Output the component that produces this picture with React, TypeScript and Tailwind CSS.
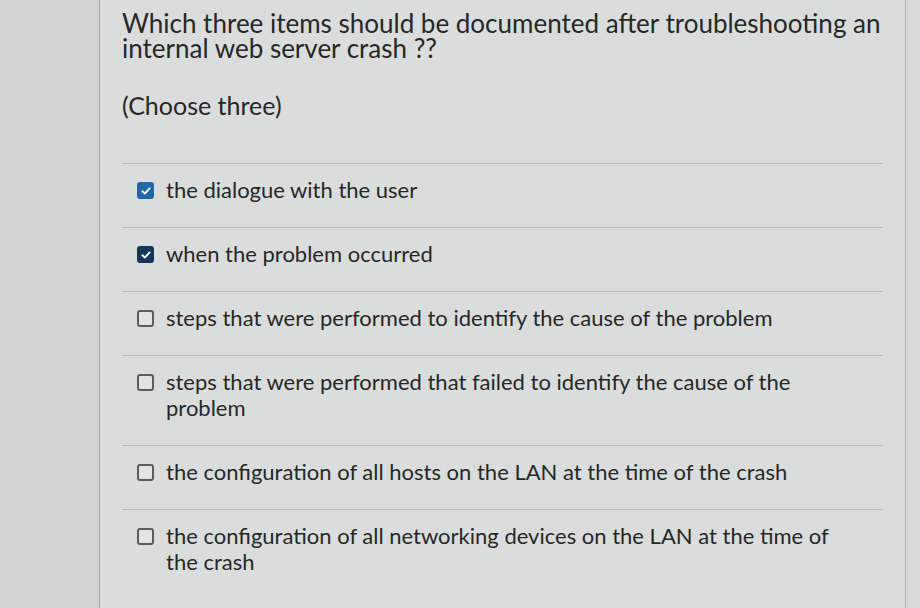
import React from "react";

type Option = { text: string; checked?: boolean; tone?: string };

const options: Option[] = [
  { text: "the dialogue with the user", checked: true, tone: "bg-[#1f68a8]" },
  { text: "when the problem occurred", checked: true, tone: "bg-[#16355a]" },
  { text: "steps that were performed to identify the cause of the problem" },
  {
    text: "steps that were performed that failed to identify the cause of the problem",
  },
  { text: "the configuration of all hosts on the LAN at the time of the crash" },
  {
    text: "the configuration of all networking devices on the LAN at the time of the crash",
  },
];

function Box({ checked, tone }: { checked?: boolean; tone?: string }) {
  if (checked) {
    return (
      <span
        className={`mt-[5px] flex h-[17px] w-[17px] shrink-0 items-center justify-center rounded-[3px] ${tone}`}
      >
        <svg viewBox="0 0 16 16" className="h-[12px] w-[12px]">
          <path
            d="M3.2 8.4 L6.4 11.4 L12.8 4.6"
            fill="none"
            stroke="#ffffff"
            strokeWidth="2.6"
            strokeLinecap="round"
            strokeLinejoin="round"
          />
        </svg>
      </span>
    );
  }
  return (
    <span className="mt-[5px] h-[17px] w-[17px] shrink-0 rounded-[3px] border-2 border-[#5a5d5c] bg-[#e2e5e4]" />
  );
}

export default function App() {
  return (
    <div
      className="flex h-[608px] w-[920px] overflow-hidden bg-[#d8dbda] text-[#262827]"
      style={{ fontFamily: "Lato, 'Open Sans', sans-serif" }}
    >
      <div className="w-[100px] shrink-0 border-r border-[#9fa3a1] bg-[#d2d5d3]" />
      <div className="flex w-[806px] shrink-0 flex-col border-r border-[#b2b6b4] bg-[#dadddc] pl-[22px] pr-[22px]">
        <h1 className="-mr-[14px] pt-[11px] text-[26px] leading-[25px]">
          Which three items should be documented after troubleshooting an internal web server crash ??
        </h1>
        <p className="mt-[30px] text-[25px] leading-[28px]">(Choose three)</p>
        <div className="mt-[44px] flex flex-col">
          {options.map((o, i) => (
            <div
              key={i}
              className="flex gap-[12px] border-t border-[#b7bbb9] pb-[24px] pl-[15px] pt-[13px]"
            >
              <Box checked={o.checked} tone={o.tone} />
              <span className="w-[670px] text-[22px] leading-[26px]">{o.text}</span>
            </div>
          ))}
        </div>
      </div>
      <div className="flex-1 bg-[#d6d9d8]" />
    </div>
  );
}
